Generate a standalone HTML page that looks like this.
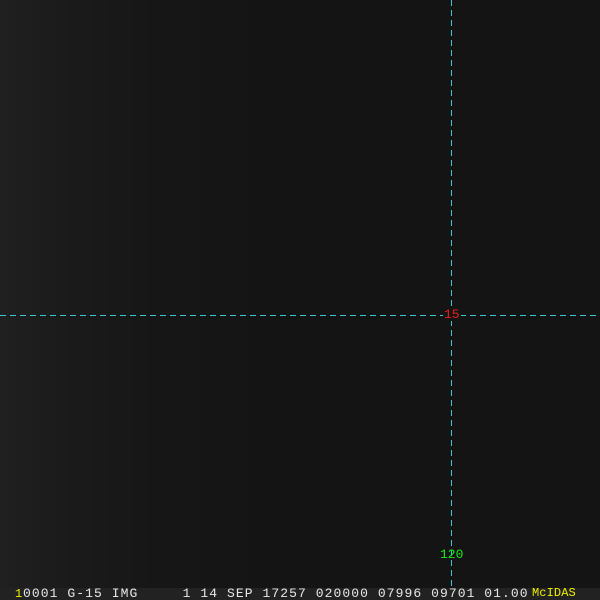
<!DOCTYPE html>
<html><head><style>
html,body{margin:0;padding:0;background:#141414;}
#c{position:relative;width:600px;height:600px;overflow:hidden;
background:linear-gradient(90deg,#202020 0px,#1b1b1b 60px,#161616 160px,#141414 300px,#141414 600px);}
.h{position:absolute;left:0;top:315px;width:600px;height:1px;
background:repeating-linear-gradient(90deg,#3cc8d0 0 6px,transparent 6px 10px);}
.v{position:absolute;left:451px;top:0;width:1px;height:588px;
background:repeating-linear-gradient(180deg,#3cc8d0 0 6px,transparent 6px 10px);}
.t{position:absolute;font-family:"Liberation Mono",monospace;font-size:13px;line-height:13px;}
#bar{position:absolute;left:0;top:588px;width:600px;height:12px;background:#222;}
</style></head><body><div id="c">
<div class="h"></div><div class="v"></div>
<div class="t" style="left:443px;top:308px;color:#f01c1c;background:#141414;padding:0 1px">15</div>
<div class="t" style="left:440px;top:548px;color:#1ee81e;">120</div>
<div id="bar"></div>
<div class="t" style="left:15px;top:588px;color:#f0f000;font-size:12px">1</div>
<div class="t" style="left:23px;top:587px;color:#e8e8e8;white-space:pre;letter-spacing:1.07px">0001 G-15 IMG     1 14 SEP 17257 020000 07996 09701 01.00</div>
<div class="t" style="left:532px;top:587px;color:#f0f000;font-size:12px;letter-spacing:0.1px">McIDAS</div>
</div></body></html>
